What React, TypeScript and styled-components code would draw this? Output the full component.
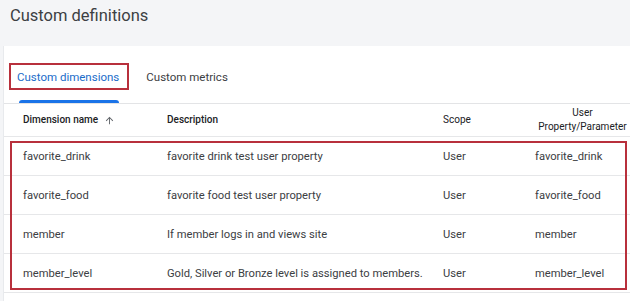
import React from "react";
import styled, { createGlobalStyle } from "styled-components";

const GlobalStyle = createGlobalStyle`
  html, body { margin: 0; padding: 0; background: #ffffff; }
  body { font-family: Roboto, "Noto Sans", Arial, sans-serif; }
  * { box-sizing: border-box; }
`;

const Page = styled.div`
  width: 630px;
  height: 301px;
  overflow: hidden;
  background: #f4f5f7;
  display: flex;
  flex-direction: column;
`;

const TitleBar = styled.header`
  height: 46px;
  padding: 5px 0 0 10px;
  display: flex;
  align-items: flex-start;
`;

const Title = styled.h1`
  margin: 0;
  font-size: 16.5px;
  font-weight: 400;
  color: #3c4043;
  line-height: 22px;
`;

const Card = styled.section`
  position: relative;
  flex: 1;
  margin-left: 3px;
  background: #ffffff;
  border-left: 1px solid #e8eaed;
`;

const TabBar = styled.nav`
  display: flex;
  align-items: stretch;
  height: 58px;
  padding: 10px 0 0 13px;
  border-bottom: 1px solid #e3e4e6;
`;

const Tab = styled.div<{ $active?: boolean }>`
  position: relative;
  display: flex;
  align-items: center;
  justify-content: center;
  padding: 0 0 5px;
  margin-right: 27px;
  font-size: 11.5px;
  font-weight: 400;
  color: ${(p) => (p.$active ? "#1a6cc9" : "#3c4043")};
  ${(p) =>
    p.$active &&
    `
    &::after {
      content: "";
      position: absolute;
      left: 2px;
      right: 0;
      bottom: 0;
      height: 3px;
      border-radius: 3px 3px 0 0;
      background: #1a73e8;
    }
  `}
`;

const Highlight = styled.div`
  position: absolute;
  border: 2px solid #b8303c;
  pointer-events: none;
`;

const Row = styled.div<{ $head?: boolean }>`
  display: grid;
  grid-template-columns: 144px 276px 92px 1fr;
  align-items: center;
  height: ${(p) => (p.$head ? "33px" : "39px")};
  padding-left: 19px;
  border-bottom: 1px solid #e6e7e9;
  font-size: ${(p) => (p.$head ? "10px" : "11.2px")};
  font-weight: ${(p) => (p.$head ? 500 : 400)};
  color: ${(p) => (p.$head ? "#202124" : "#3c4043")};
`;

const Cell = styled.div`
  white-space: nowrap;
`;

const HeadCell = styled.div<{ $light?: boolean }>`
  display: flex;
  align-items: center;
  gap: 6px;
  line-height: 14px;
  white-space: nowrap;
  font-weight: ${(p) => (p.$light ? 400 : 500)};
`;

const StackedHead = styled.div`
  display: flex;
  flex-direction: column;
  align-items: center;
  text-align: center;
  font-size: 10px;
  font-weight: 400;
  line-height: 14px;
  white-space: nowrap;
`;

const ArrowIcon = () => (
  <svg width="11" height="11" viewBox="0 0 24 24" fill="#5f6368">
    <path d="M4 12l1.41 1.41L11 7.83V20h2V7.83l5.58 5.59L20 12l-8-8-8 8z" />
  </svg>
);

const rows = [
  ["favorite_drink", "favorite drink test user property", "User", "favorite_drink"],
  ["favorite_food", "favorite food test user property", "User", "favorite_food"],
  ["member", "If member logs in and views site", "User", "member"],
  ["member_level", "Gold, Silver or Bronze level is assigned to members.", "User", "member_level"],
];

export default function App() {
  return (
    <>
      <GlobalStyle />
      <Page>
        <TitleBar>
          <Title>Custom definitions</Title>
        </TitleBar>
        <Card>
          <TabBar>
            <Tab $active>Custom dimensions</Tab>
            <Tab>Custom metrics</Tab>
          </TabBar>
          <Row $head>
            <HeadCell>
              Dimension name <ArrowIcon />
            </HeadCell>
            <HeadCell>Description</HeadCell>
            <HeadCell $light>Scope</HeadCell>
            <StackedHead>
              <span>User</span>
              <span>Property/Parameter</span>
            </StackedHead>
          </Row>
          {rows.map((r) => (
            <Row key={r[0]}>
              {r.map((c, i) => (
                <Cell key={i}>{c}</Cell>
              ))}
            </Row>
          ))}
          <Highlight style={{ left: 5, top: 17, width: 120, height: 27 }} />
          <Highlight style={{ left: 6, top: 95, width: 617, height: 149 }} />
        </Card>
      </Page>
    </>
  );
}
